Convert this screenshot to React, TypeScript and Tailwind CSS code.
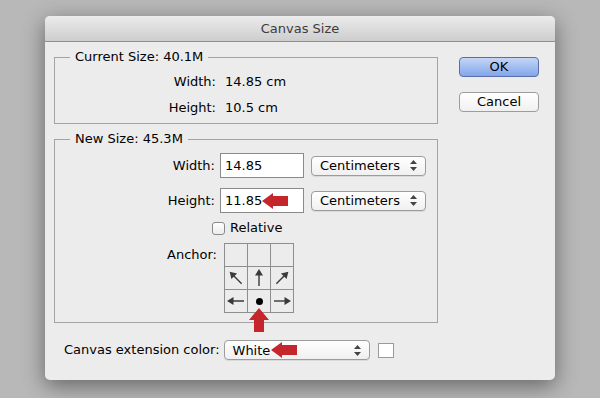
const font = "font-['DejaVu_Sans',_'Liberation_Sans',_sans-serif]";

function RedArrowLeft() {
  return (
    <svg width="26" height="16" viewBox="0 0 26 16" className="shrink-0">
      <polygon points="0,8 11,0 11,3 26,3 26,13 11,13 11,16" fill="#c4262b" />
    </svg>
  );
}

function RedArrowUp() {
  return (
    <svg width="20" height="24" viewBox="0 0 20 24">
      <polygon points="10,0 20,12 15,12 15,24 5,24 5,12 0,12" fill="#c4262b" />
    </svg>
  );
}

function Stepper() {
  return (
    <svg width="7" height="11" viewBox="0 0 7 11" className="shrink-0">
      <polygon points="3.5,0 7,4 0,4" fill="#444" />
      <polygon points="0,7 7,7 3.5,11" fill="#444" />
    </svg>
  );
}

function PopUp({ label, width, extra }: { label: string; width: string; extra?: React.ReactNode }) {
  return (
    <div
      className={`${width} h-[20px] rounded-[4px] border border-[#9c9c9c] bg-gradient-to-b from-white to-[#f0f0f0] flex items-center pl-[8px] pr-[8px] shadow-[0_1px_0_rgba(0,0,0,0.08)]`}
    >
      <span className="text-[13px] text-black leading-none">{label}</span>
      {extra}
      <div className="flex-1" />
      <Stepper />
    </div>
  );
}

function Arrow({ dir }: { dir: "n" | "ne" | "nw" | "w" | "e" }) {
  const rot = { n: 0, ne: 45, nw: -45, w: -90, e: 90 }[dir];
  return (
    <svg width="22" height="22" viewBox="0 0 22 22">
      <g transform={`rotate(${rot} 11 11)`}>
        <line x1="11" y1="19" x2="11" y2="7" stroke="#3a3a3a" strokeWidth="1.4" />
        <polygon points="11,2 15,8.5 7,8.5" fill="#3a3a3a" />
      </g>
    </svg>
  );
}

function Cell({ children }: { children?: React.ReactNode }) {
  return (
    <div className="w-[23px] h-[23px] border-r border-b border-[#8e8e8e] flex items-center justify-center">
      {children}
    </div>
  );
}

export default function App() {
  return (
    <div className={`w-[600px] h-[398px] bg-[#b8b8b8] overflow-hidden pt-[16px] pl-[45px] ${font}`}>
      <div className="w-[510px] h-[364px] bg-[#ececec] rounded-[5px] shadow-[0_6px_22px_rgba(0,0,0,0.45)] flex flex-col overflow-hidden">
        <div className="h-[26px] shrink-0 bg-gradient-to-b from-[#ececec] to-[#cdcdcd] border-b border-[#8f8f8f] flex items-center justify-center">
          <span className="text-[13px] text-[#3c3c3c]">Canvas Size</span>
        </div>

        <div className="flex pl-[9px] pt-[8px] text-[13px] text-black">
          <div className="flex flex-col w-[384px]">
            <fieldset className="h-[74px] border border-[#a3a3a3] px-0 pt-0 m-0">
              <legend className="ml-[15px] px-[5px] leading-[14px]">Current Size: 40.1M</legend>
              <div className="flex h-[25px] items-center mt-[5px]">
                <span className="w-[161px] text-right">Width:</span>
                <span className="ml-[9px]">14.85 cm</span>
              </div>
              <div className="flex h-[25px] items-center mt-[1px]">
                <span className="w-[161px] text-right">Height:</span>
                <span className="ml-[9px]">10.5 cm</span>
              </div>
            </fieldset>

            <fieldset className="h-[191px] mt-[8px] border border-[#a3a3a3] px-0 pt-0 m-0">
              <legend className="ml-[15px] px-[5px] leading-[14px]">New Size: 45.3M</legend>
              <div className="flex items-center h-[25px] mt-[7px]">
                <span className="w-[160px] text-right">Width:</span>
                <div className="ml-[5px] w-[84px] h-[25px] bg-white border border-[#8a8a8a] flex items-center pl-[4px]">14.85</div>
                <div className="ml-[7px]">
                  <PopUp label="Centimeters" width="w-[115px]" />
                </div>
              </div>
              <div className="flex items-center h-[25px] mt-[10px]">
                <span className="w-[160px] text-right">Height:</span>
                <div className="ml-[5px] w-[84px] h-[25px] bg-white border border-[#8a8a8a] flex items-center pl-[4px]">
                  <span>11.85</span>
                  <RedArrowLeft />
                </div>
                <div className="ml-[7px]">
                  <PopUp label="Centimeters" width="w-[115px]" />
                </div>
              </div>
              <div className="flex items-center h-[14px] mt-[8px] pl-[157px]">
                <div className="w-[13px] h-[13px] rounded-[3px] border border-[#8a8a8a] bg-gradient-to-b from-white to-[#ececec]" />
                <span className="ml-[5px]">Relative</span>
              </div>
              <div className="flex mt-[8px] pl-[112px]">
                <span className="mt-[2px] w-[57px]">Anchor:</span>
                <div className="flex flex-col items-center">
                  <div className="grid grid-cols-3 border-l border-t border-[#8e8e8e] w-[70px]">
                    <Cell />
                    <Cell />
                    <Cell />
                    <Cell><Arrow dir="nw" /></Cell>
                    <Cell><Arrow dir="n" /></Cell>
                    <Cell><Arrow dir="ne" /></Cell>
                    <Cell><Arrow dir="w" /></Cell>
                    <Cell>
                      <div className="w-[7px] h-[7px] rounded-full bg-black" />
                    </Cell>
                    <Cell><Arrow dir="e" /></Cell>
                  </div>
                  <div className="-mt-[5px]">
                    <RedArrowUp />
                  </div>
                </div>
              </div>
            </fieldset>

            <div className="flex items-center mt-[17px] pl-[10px]">
              <span>Canvas extension color:</span>
              <div className="ml-[4px]">
                <PopUp
                  label="White"
                  width="w-[146px]"
                  extra={<span className="ml-[1px] flex"><RedArrowLeft /></span>}
                />
              </div>
              <div className="ml-[8px] w-[16px] h-[15px] bg-white border border-[#9a9a9a]" />
            </div>
          </div>

          <div className="flex flex-col ml-[21px] pt-[7px]">
            <div className="w-[80px] h-[20px] rounded-[4px] border border-[#5a6fa8] bg-gradient-to-b from-[#c4d5f5] to-[#83a6ea] flex items-center justify-center">
              OK
            </div>
            <div className="mt-[15px] w-[80px] h-[20px] rounded-[4px] border border-[#9c9c9c] bg-gradient-to-b from-white to-[#f0f0f0] flex items-center justify-center">
              Cancel
            </div>
          </div>
        </div>
      </div>
    </div>
  );
}
